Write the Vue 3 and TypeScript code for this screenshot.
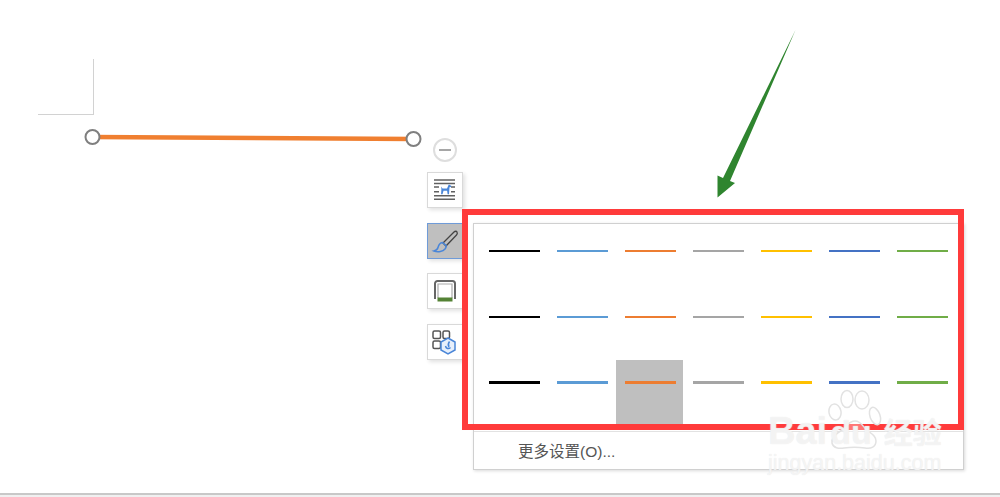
<template>
  <div class="page">
    <!-- page corner mark -->
    <div class="corner-mark"></div>

    <!-- selected line + annotation arrow, free canvas -->
    <svg class="canvas-art" width="1000" height="497" viewBox="0 0 1000 497">
      <line x1="92" y1="137" x2="413" y2="139" stroke="#f07f30" stroke-width="4.5" />
      <circle cx="92.5" cy="137" r="7" fill="#fff" stroke="#7f7f7f" stroke-width="2" />
      <circle cx="413.5" cy="139" r="7" fill="#fff" stroke="#7f7f7f" stroke-width="2" />
      <path d="M795.5 30 L730 181 L735 183 L717.5 197.5 L717.5 175.5 L723 178 Z" fill="#2f852f" />
    </svg>

    <div class="layout-tools">
      <div class="collapse-btn"><span></span></div>
      <div class="tool-btn">
        <svg width="34" height="34" viewBox="0 0 34 34">
          <path d="M6 7h21M6 10.500h21M6 14h5M23 14h4M6 18.700h5M23 18.700h4M6 22.700h21M6 26.300h21" fill="none" stroke="#606060" stroke-width="1.500" />
          <path d="M13 13.500l1.500 2h4.500l1.500-3.500 .5-.5 2.500 1.500-.5 1-1.500 .3-.5 7h-1.400l-.5-3.500h-3.600l-1 3.500h-1.400l.3-5.500z" fill="#4a86d8" />
        </svg>
      </div>
      <div class="tool-btn active">
        <svg width="34" height="34" viewBox="0 0 34 34">
          <path d="M15 19L26 8c1-1 2.500-1 3 0s.500 2-.500 3L18 22z" fill="none" stroke="#444" stroke-width="1.300" />
          <path d="M14.500 18.500c-3 .500-4 3-4.500 5-.500 2-2 3-4 3.500 4 1.500 9 .500 11-2 1.500-2 1.500-3.500 .500-4z" fill="none" stroke="#4a86d8" stroke-width="1.500" />
        </svg>
      </div>
      <div class="tool-btn">
        <svg width="34" height="34" viewBox="0 0 34 34">
          <path d="M7 25V9.500A2.500 2.500 0 0 1 9.500 7h15A2.500 2.500 0 0 1 27 9.500V25" fill="none" stroke="#666" stroke-width="2" />
          <path d="M10 24V10h14v14" fill="none" stroke="#aaa" stroke-width="1.200" />
          <rect x="9.500" y="23.500" width="15" height="4" fill="#548235" />
        </svg>
      </div>
      <div class="tool-btn">
        <svg width="34" height="34" viewBox="0 0 34 34">
          <g fill="none" stroke="#555" stroke-width="1.500">
            <rect x="5" y="6" width="7.500" height="7.500" rx="1.500" />
            <rect x="15" y="6" width="6.500" height="7.500" rx="1.500" />
            <rect x="5" y="16" width="7.500" height="7.500" rx="1.500" />
          </g>
          <path d="M20 13l7 4v8l-7 4-7-4v-8z" fill="#e8f0fb" stroke="#4a86d8" stroke-width="1.500" />
          <path d="M17.500 21c.5 2.500 3 3.500 5 1.500M21.500 16.500c-1.500 2-1.500 4-.5 5.500" fill="none" stroke="#4a86d8" stroke-width="1.500" />
        </svg>
      </div>
    </div>

    <!-- line style dropdown -->
    <div class="style-menu">
      <div class="style-grid">
        <template v-for="(row, r) in rows" :key="r">
          <div
            v-for="color in colors"
            :key="r + color"
            class="style-cell"
            :class="{ selected: r === 2 && color === selectedColor }"
          >
            <div class="style-line" :style="{ background: color, height: row + 'px' }"></div>
          </div>
        </template>
      </div>
      <div class="menu-footer">更多设置(O)...</div>
    </div>

    <div class="red-box"></div>

    <!-- image host watermark -->
    <div class="watermark">
      <svg class="paw" width="56" height="66" viewBox="0 0 56 66">
        <g fill="rgba(255,255,255,0.3)" stroke="#e2e2e2" stroke-width="1.500">
          <ellipse cx="7" cy="24" rx="6" ry="8" transform="rotate(-10 7 24)" />
          <ellipse cx="19" cy="11" rx="6" ry="8.500" />
          <ellipse cx="34" cy="12" rx="7" ry="9" />
          <ellipse cx="47" cy="28" rx="5" ry="9" transform="rotate(-20 47 28)" />
          <path d="M27 33c-6 0-8 5-13 9-5 3-11 7-10 13 1 5 7 6 12 5 7-1 14-1 21 0 6 1 11-1 11-7 0-5-4-7-8-10-5-3-6-10-13-10z" />
        </g>
      </svg>
      <div class="wm-title"><span>Bai</span><span class="wm-du">du</span><span class="wm-cn">经验</span></div>
      <div class="wm-url">jingyan.baidu.com</div>
    </div>

    <div class="bottom-bar"></div>
  </div>
</template>

<script setup lang="ts">
const colors: string[] = ['#000000', '#5b9bd5', '#ed7d31', '#a5a5a5', '#ffc000', '#4472c4', '#70ad47']
const rows: number[] = [2, 2, 3]
const selectedColor = '#ed7d31'
</script>

<style>
html, body {
  margin: 0;
  background: #fff;
}
</style>

<style scoped>
.page {
  position: relative;
  width: 1000px;
  height: 497px;
  overflow: hidden;
  background: #fff;
  font-family: "Liberation Sans", "Noto Sans CJK SC", sans-serif;
}

.corner-mark {
  position: absolute;
  left: 38px;
  top: 59px;
  width: 55px;
  height: 55px;
  border-right: 1px solid #d2d2d2;
  border-bottom: 1px solid #d2d2d2;
}

.canvas-art {
  position: absolute;
  left: 0;
  top: 0;
  z-index: 3;
  pointer-events: none;
}

.layout-tools {
  position: absolute;
  left: 427px;
  top: 138px;
  display: flex;
  flex-direction: column;
  gap: 14.67px;
}

.collapse-btn {
  box-sizing: border-box;
  width: 24px;
  height: 24px;
  margin: 0 0 -4.67px 6px;
  border: 2px solid #dedede;
  border-radius: 50%;
  display: flex;
  align-items: center;
  justify-content: center;
  background: #fff;
}

.collapse-btn span {
  width: 12px;
  height: 2px;
  background: #a6a6a6;
}

.tool-btn {
  box-sizing: border-box;
  width: 36px;
  height: 36px;
  border: 1px solid #d9d9d9;
  background: #fff;
  box-shadow: 2px 2px 4px rgba(0, 0, 0, 0.12);
}

.tool-btn svg {
  display: block;
}

.tool-btn.active {
  background: #bfbfbf;
  border-color: #6f9bd8;
}

.style-menu {
  position: absolute;
  left: 473px;
  top: 223px;
  box-sizing: border-box;
  width: 491px;
  height: 247px;
  padding-top: 5px;
  border: 1px solid #d0d0d0;
  background: #fff;
  box-shadow: 1px 1px 3px rgba(0, 0, 0, 0.15);
}

.style-grid {
  display: grid;
  grid-template-columns: repeat(7, 68px);
  grid-auto-rows: 65.5px;
  padding-left: 6px;
}

.style-cell {
  padding: 21px 8px 0 8.5px;
}

.style-cell.selected {
  margin-right: 1px;
  background: #bfbfbf;
}

.style-line {
  width: 51px;
}

.menu-footer {
  margin-top: 5px;
  padding: 10px 0 0 44px;
  border-top: 1px solid #e2e2e2;
  font-size: 15.5px;
  line-height: 20px;
  color: #555;
}

.red-box {
  position: absolute;
  left: 462px;
  top: 209px;
  box-sizing: border-box;
  width: 502px;
  height: 221px;
  border: 6px solid #ff3b3b;
  z-index: 2;
}

.watermark {
  position: absolute;
  left: 768px;
  top: 388px;
  width: 190px;
  z-index: 4;
  color: rgba(255, 255, 255, 0.6);
}

.paw {
  position: absolute;
  left: 60px;
  top: 0;
}

.wm-title {
  position: relative;
  display: flex;
  align-items: baseline;
  padding-top: 22px;
  font-size: 38px;
  line-height: 42px;
  font-weight: 700;
  white-space: nowrap;
  text-shadow: 0 0 1px #e2e2e2;
}

.wm-du {
  margin-left: 3px;
  font-size: 34px;
}

.wm-cn {
  margin-left: 12px;
  font-size: 29px;
  font-family: "Noto Sans CJK SC", sans-serif;
}

.wm-url {
  margin-top: -2.5px;
  font-size: 21.5px;
  line-height: 24px;
  white-space: nowrap;
  text-shadow: 0 0 1px #e2e2e2;
}

.bottom-bar {
  position: absolute;
  left: 0;
  right: 0;
  bottom: 0;
  height: 4px;
  box-sizing: border-box;
  border-top: 2px solid #c8c8c8;
  background: #f0f0f0;
}
</style>
